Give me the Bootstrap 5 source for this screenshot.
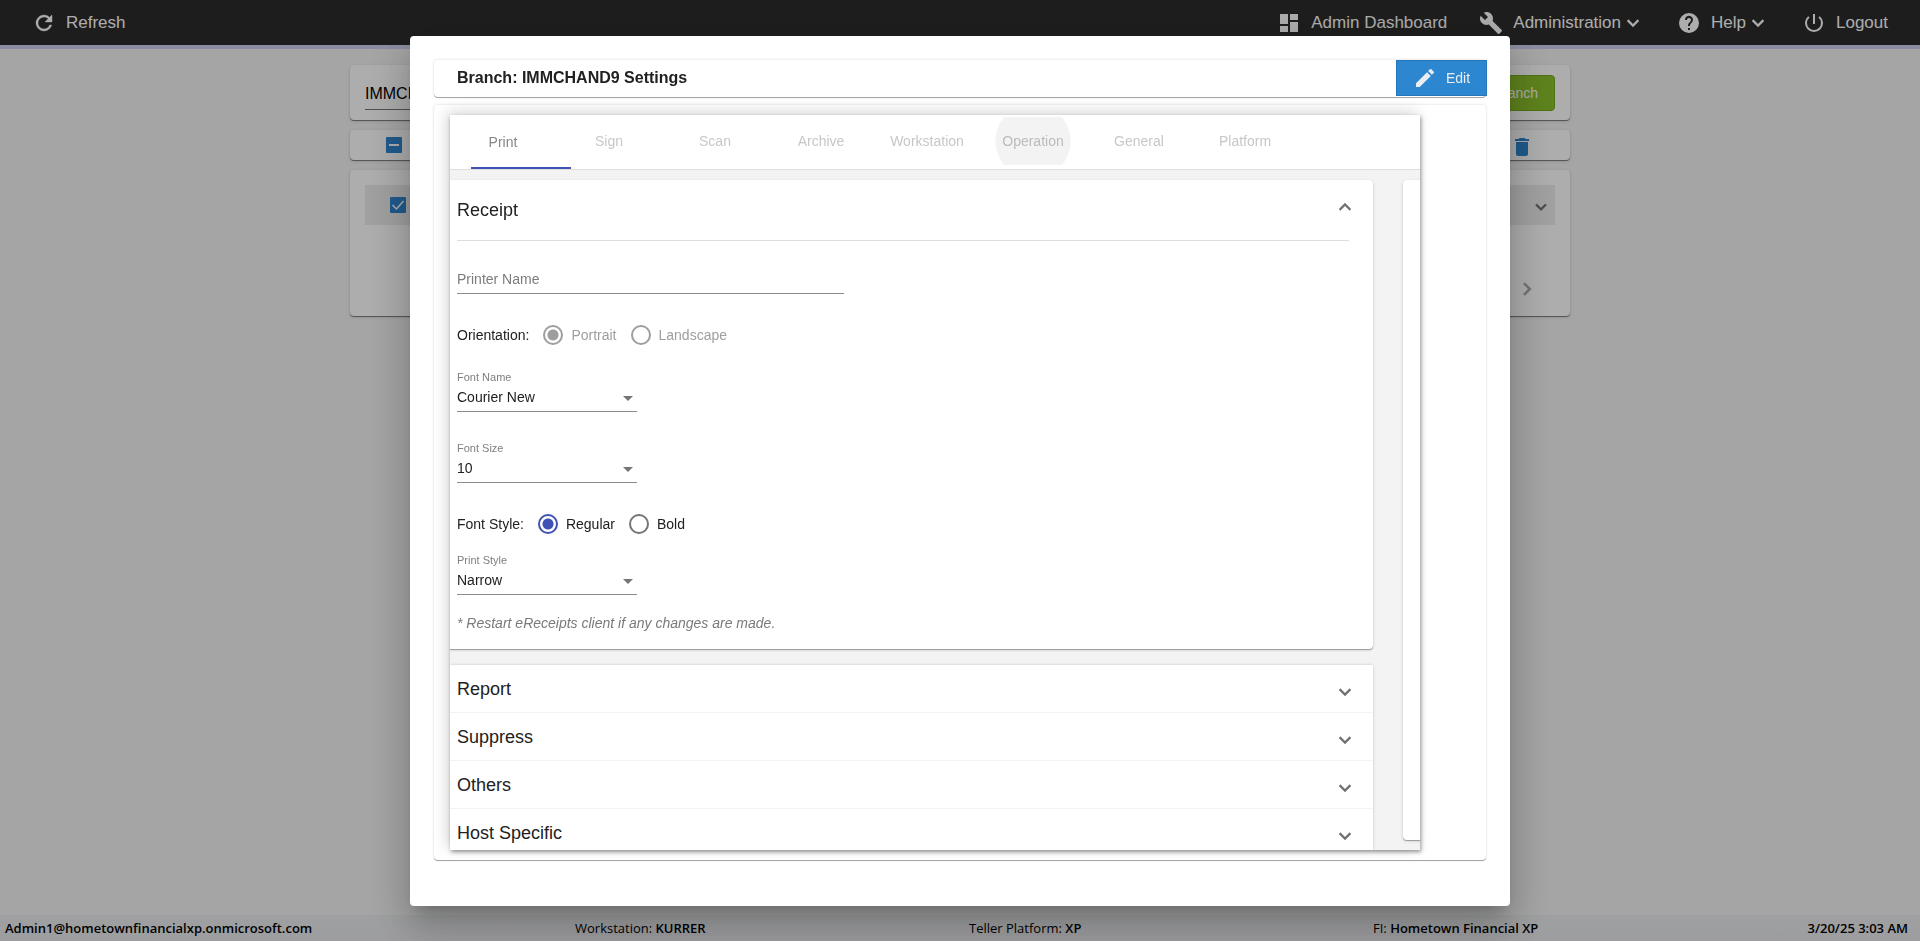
<!DOCTYPE html>
<html lang="en">
<head>
<meta charset="utf-8">
<meta name="viewport" content="width=device-width, initial-scale=1">
<title>Branch Settings</title>
<link href="https://cdn.jsdelivr.net/npm/bootstrap@5.3.0/dist/css/bootstrap.min.css" rel="stylesheet">
<style>
  body { font: 14px/20px "Liberation Sans", Arial, sans-serif; background: #f3f3f3; color: #212121; min-height: 100vh; overflow: hidden; }
  svg { fill: currentColor; flex: none; }
  .topbar { background: #2c2c2c; border-bottom: 4px solid #cccfee; height: 49px; padding: 0 32px; font-size: 17px; }
  .topbar a { color: #fff; text-decoration: none; white-space: nowrap; }
  .topbar .label-gap { margin: 0 0 0 10px; }
  .topbar .links { gap: 32px; }

  .board { width: 1220px; max-width: 100%; padding-top: 16px; gap: 10px; }
  .panel { background: #fff; border-radius: 4px; box-shadow: 0 1px 0 rgba(0,0,0,.38), 0 1px 3px rgba(0,0,0,.22); }
  .panel-search { padding: 10px 15px 9px; height: 55px; }
  .search-box { border: 0; border-bottom: 1px solid #777; width: 300px; height: 35px; font-size: 16px; background: none; color: #000; padding: 3px 0 0; outline: 0; }
  .btn-green { background: #8bc02a; border: 1px solid #76a81f; color: #fff; border-radius: 4px; height: 36px; width: 130px; font-size: 14px; padding: 0 16px 0 0; text-align: right; }
  .panel-tools { height: 30px; padding: 0 36px; color: #2f86d0; }
  .panel-list { height: 146px; padding: 15px; }
  .list-row-on { background: #ececec; height: 40px; padding: 0 3px 0 25px; }
  .tick { appearance: none; width: 16px; height: 16px; margin: 0; border-radius: 1px; background: #2f86d0 center/16px no-repeat; }
  .tick-all { background-image: url("data:image/svg+xml,%3Csvg xmlns='http://www.w3.org/2000/svg' viewBox='0 0 16 16'%3E%3Cpath fill='%23fff' d='M3 7h10v2H3z'/%3E%3C/svg%3E"); }
  .tick-on { background-image: url("data:image/svg+xml,%3Csvg xmlns='http://www.w3.org/2000/svg' viewBox='0 0 16 16'%3E%3Cpath fill='none' stroke='%23fff' stroke-width='1.5' d='M2.5 8l4 4 7-8'/%3E%3C/svg%3E"); }
  .ghost { background: none; border: 0; padding: 0; display: flex; color: inherit; }

  .statusbar { display: grid; grid-template-columns: 570fr 394fr 404fr 430fr 105fr; height: 26px; padding: 0 12px 0 5px; background: linear-gradient(#eaeced, #e8e8ec); color: #000; font: 13px/26px "Open Sans", "Noto Sans", sans-serif; white-space: nowrap; }
  .statusbar b { font-weight: 600; }

  .modal-backdrop.show { opacity: .32; }
  .modal-dialog { max-width: 1100px; height: calc(100vh - 71px); margin: 36px auto 35px; }
  .modal-content { height: 100%; border: 0; border-radius: 4px; padding: 24px 24px 46px; box-shadow: 0 11px 15px -7px rgba(0,0,0,.2), 0 24px 38px 3px rgba(0,0,0,.14), 0 9px 46px 8px rgba(0,0,0,.12); gap: 8px; color: inherit; }
  .sheet { background: #fff; border-radius: 4px; box-shadow: 0 1px 0 #a3a7a6, 0 0 3px rgba(0,0,0,.16); }
  .title-sheet { height: 37px; padding-left: 23px; }
  .title-sheet h1 { font-size: 16px; line-height: 20px; font-weight: 700; margin: 0 0 2px; }
  .btn-edit { background: #2d86d0; border: 1px solid #2776b8; color: #e8eef4; height: 36px; width: 91px; border-radius: 0; font-size: 14px; padding: 0 0 0 16px; gap: 9px; margin: 0 -1px 1px 0; }
  .body-sheet { padding: 10px 66px 10px 16px; min-height: 0; }
  .frame { background: #f3f3f3; overflow: hidden; box-shadow: 1px 2px 4px rgba(0,0,0,.4), -3px -3px 14px rgba(0,0,0,.16); }
  .tabs { background: #fff; border-bottom: 1px solid #dedede; height: 55px; flex: none; }
  .tabs .nav-link { width: 106px; height: 54px; padding: 0 0 2px; border: 0; background: none; color: #c7c7c7; position: relative; border-radius: 0; }
  .tabs .nav-link.active { color: #878787; padding: 0; }
  .tabs .nav-link.active::after { content: ""; position: absolute; left: 21px; bottom: 0; width: 100px; height: 2px; background: #3f51b5; z-index: 1; }
  .ripple { color: #bbb; height: 48px; margin: 0 15px; background: radial-gradient(circle at center, #f3f3f3 37px, transparent 38px); }

  .panes { padding: 10px 0; gap: 30px; min-height: 0; }
  .pane { flex: 0 0 calc(100% - 47px); gap: 16px; min-width: 0; min-height: 0; }
  .section-card { background: #fff; border-radius: 0 4px 4px 0; padding: 0 24px 16px 7px; box-shadow: 0 1px 0 #a0a0a0, 0 1px 3px rgba(0,0,0,.2); }
  .side-card { background: #fff; border-radius: 4px; box-shadow: 0 1px 0 #a0a0a0, 0 1px 3px rgba(0,0,0,.2); }
  h2, .accordion-title { font-size: 18px; line-height: 24px; font-weight: 400; margin: 0; }
  .section-head { height: 61px; border-bottom: 1px solid #dedede; }
  .chev { color: #707070; }
  .chev-bold { stroke: currentColor; stroke-width: .4; }
  .section-head .chev { margin: 0 -8px 6px 0; }
  .form-stack { padding-top: 26px; }
  .line-input { border: 0; border-bottom: 1px solid #8a8a8a; border-radius: 0; padding: 0 0 2px; font-size: 14px; line-height: 24px; width: 387px; max-width: 100%; height: 27px; background: none; color: #212121; outline: 0; }
  .line-input::placeholder { color: #7c7c7c; opacity: 1; }
  .field { width: 180px; height: 43px; }
  .field label { display: block; font-size: 11px; line-height: 16px; color: #808080; }
  .field select { width: 100%; height: 27px; border: 0; border-bottom: 1px solid #8a8a8a; border-radius: 0; padding: 0 20px 2px 0; font-size: 14px; line-height: 24px; color: #212121; background: url("data:image/svg+xml,%3Csvg xmlns='http://www.w3.org/2000/svg' viewBox='0 0 10 5'%3E%3Cpath fill='%23757575' d='M0 0h10L5 5z'/%3E%3C/svg%3E") right 4px top 11px/10px 5px no-repeat; }
  .choices { height: 20px; margin-top: 31px; }
  .choices .form-check-input { width: 20px; height: 20px; margin: 0; border: 2px solid #757575; background: none; opacity: 1; flex: none; }
  .choices .form-check-input:checked { border-color: #3f51b5; background: radial-gradient(circle, #3f51b5 5px, transparent 6px); }
  .choices .form-check-input:disabled { border-color: #9e9e9e; opacity: 1; }
  .choices .form-check-input:disabled:checked { background: radial-gradient(circle, #9e9e9e 5px, transparent 6px); }
  .choices label { margin: 0 14px 0 8px; }
  .choices .form-check-input:disabled ~ label { color: #9e9e9e; opacity: 1; }
  .choices span { margin-right: 14px; }
  .mt-18 { margin-top: 18px; } .mt-28 { margin-top: 28px; }
  .note { color: #7a7a7a; font-style: italic; margin: 18px 0 0; }
  .fold-list { background: #fff; box-shadow: 0 0 3px rgba(0,0,0,.18); margin-bottom: -10px; overflow: hidden; min-height: 0; flex: 1 1 0; }
  .fold-row { height: 48px; padding: 0 16px 0 7px; border: 0; background: #fff; border-bottom: 1px solid #f3f3f3; flex: none; color: #212121; text-align: left; }
  .fold-row svg { margin-top: 6px; }
  .pager { padding: 50px 15px 0 0; }
</style>
</head>
<body class="d-flex flex-column">

<header class="topbar d-flex align-items-center justify-content-between">
  <a href="#" class="d-flex align-items-center"><svg width="24" height="24" viewBox="0 0 24 24" class="chev-bold"><path d="M17.65 6.35A8 8 0 1 0 19.73 14h-2.08A6 6 0 1 1 12 6c1.66 0 3.14.69 4.22 1.78L13 11h7V4z"/></svg><span class="label-gap">Refresh</span></a>
  <nav class="links d-flex align-items-center">
    <a href="#" class="d-flex align-items-center"><svg width="24" height="24" viewBox="0 0 24 24"><path d="M3 13h8V3H3zm0 8h8v-6H3zm10 0h8V11h-8zm0-18v6h8V3z"/></svg><span class="label-gap">Admin Dashboard</span></a>
    <a href="#" class="d-flex align-items-center"><svg width="24" height="24" viewBox="0 0 24 24"><path d="M22.7 19l-9.1-9.1c.9-2.3.4-5-1.5-6.9-2-2-5-2.4-7.4-1.3L9 6 6 9 1.6 4.7C.4 7.1.9 10.1 2.9 12.1c1.9 1.9 4.6 2.4 6.9 1.5l9.1 9.1c.4.4 1 .4 1.4 0l2.3-2.3c.5-.4.5-1.1.1-1.4z"/></svg><span class="label-gap">Administration</span><svg width="24" height="24" viewBox="0 0 24 24" class="chev-bold"><path d="M7.41 8.59L12 13.17l4.59-4.58L18 10l-6 6-6-6z"/></svg></a>
    <a href="#" class="d-flex align-items-center"><svg width="24" height="24" viewBox="0 0 24 24"><path d="M12 2a10 10 0 1 0 0 20 10 10 0 0 0 0-20zm1 17h-2v-2h2zm2.07-7.75l-.9.92C13.45 12.9 13 13.5 13 15h-2v-.5c0-1.1.45-2.1 1.17-2.83l1.24-1.26A2 2 0 1 0 10 9H8a4 4 0 1 1 7.07 2.25z"/></svg><span class="label-gap">Help</span><svg width="24" height="24" viewBox="0 0 24 24" class="chev-bold"><path d="M7.41 8.59L12 13.17l4.59-4.58L18 10l-6 6-6-6z"/></svg></a>
    <a href="#" class="d-flex align-items-center"><svg width="24" height="24" viewBox="0 0 24 24"><path d="M11 3h2v10h-2zM17.83 5.17l-1.42 1.42A7 7 0 1 1 7.58 6.58L6.17 5.17a9 9 0 1 0 11.66 0z"/></svg><span class="label-gap">Logout</span></a>
  </nav>
</header>

<main class="board d-flex flex-column mx-auto flex-grow-1">
  <div class="panel panel-search d-flex justify-content-between">
    <input class="search-box" type="text" value="IMMCHAND9" aria-label="Search branch">
    <button type="button" class="btn-green">Add Branch</button>
  </div>
  <div class="panel panel-tools d-flex align-items-center justify-content-between">
    <input type="checkbox" class="tick tick-all" aria-label="Select all">
    <button type="button" class="ghost mt-1" aria-label="Delete"><svg width="24" height="24" viewBox="0 0 24 24"><path d="M6 19c0 1.1.9 2 2 2h8c1.1 0 2-.9 2-2V7H6zM19 4h-3.500l-1-1h-5l-1 1H5v2h14z"/></svg></button>
  </div>
  <div class="panel panel-list">
    <div class="list-row-on d-flex align-items-center justify-content-between">
      <input type="checkbox" class="tick tick-on" checked aria-label="Select IMMCHAND9">
      <button type="button" class="ghost mt-1 chev" aria-label="Expand"><svg width="22" height="22" viewBox="0 0 24 24" class="chev-bold"><path d="M7.41 8.59L12 13.17l4.59-4.58L18 10l-6 6-6-6z"/></svg></button>
    </div>
    <div class="pager d-flex justify-content-end"><button type="button" class="ghost chev" aria-label="Next page"><svg width="26" height="28" viewBox="0 0 24 24" opacity=".6" class="chev-bold"><path d="M10 6L8.590 7.410 13.170 12l-4.580 4.590L10 18l6-6z"/></svg></button></div>
  </div>
</main>

<footer class="statusbar">
  <b>Admin1@hometownfinancialxp.onmicrosoft.com</b>
  <span>Workstation: <b>KURRER</b></span>
  <span>Teller Platform: <b>XP</b></span>
  <span>FI: <b>Hometown Financial XP</b></span>
  <b class="d-flex justify-content-end">3/20/25 3:03 AM</b>
</footer>

<div class="modal-backdrop show"></div>
<div class="modal d-block" tabindex="-1" role="dialog" aria-labelledby="dlgTitle">
  <div class="modal-dialog">
    <div class="modal-content">
      <div class="sheet title-sheet d-flex align-items-center justify-content-between flex-shrink-0">
        <h1 id="dlgTitle">Branch: IMMCHAND9 Settings</h1>
        <button type="button" class="btn-edit d-flex align-items-center"><svg width="24" height="24" viewBox="0 0 24 24"><path d="M3 17.25V21h3.75L17.81 9.94l-3.75-3.75zM20.71 7.04a1 1 0 0 0 0-1.41l-2.34-2.34a1 1 0 0 0-1.41 0l-1.83 1.83 3.75 3.75z"/></svg>Edit</button>
      </div>
      <div class="sheet body-sheet d-flex flex-grow-1">
        <div class="frame d-flex flex-column flex-grow-1">
          <ul class="nav tabs flex-nowrap" role="tablist">
            <li class="nav-item"><button type="button" class="nav-link active" role="tab">Print</button></li>
            <li class="nav-item"><button type="button" class="nav-link" role="tab">Sign</button></li>
            <li class="nav-item"><button type="button" class="nav-link" role="tab">Scan</button></li>
            <li class="nav-item"><button type="button" class="nav-link" role="tab">Archive</button></li>
            <li class="nav-item"><button type="button" class="nav-link" role="tab">Workstation</button></li>
            <li class="nav-item"><button type="button" class="nav-link" role="tab"><span class="ripple d-flex align-items-center justify-content-center">Operation</span></button></li>
            <li class="nav-item"><button type="button" class="nav-link" role="tab">General</button></li>
            <li class="nav-item"><button type="button" class="nav-link" role="tab">Platform</button></li>
          </ul>
          <div class="panes d-flex flex-grow-1">
            <div class="pane d-flex flex-column">
              <section class="section-card flex-shrink-0">
                <div class="section-head d-flex align-items-center justify-content-between">
                  <h2>Receipt</h2>
                  <button type="button" class="ghost chev" aria-label="Collapse"><svg width="24" height="24" viewBox="0 0 24 24" class="chev-bold"><path d="M12 8l-6 6 1.410 1.410L12 10.830l4.590 4.580L18 14z"/></svg></button>
                </div>
                <div class="form-stack"><input type="text" class="line-input d-block" placeholder="Printer Name" aria-label="Printer Name"></div>
                <div class="choices d-flex align-items-center" role="radiogroup" aria-labelledby="orientLabel">
                  <span id="orientLabel">Orientation:</span>
                  <div class="d-flex align-items-center"><input class="form-check-input" type="radio" name="orient" id="portrait" checked disabled><label for="portrait">Portrait</label></div>
                  <div class="d-flex align-items-center"><input class="form-check-input" type="radio" name="orient" id="landscape" disabled><label for="landscape">Landscape</label></div>
                </div>
                <div class="field mt-4"><label for="fontName">Font Name</label><select class="form-select" id="fontName"><option>Courier New</option></select></div>
                <div class="field mt-28"><label for="fontSize">Font Size</label><select class="form-select" id="fontSize"><option>10</option></select></div>
                <div class="choices d-flex align-items-center" role="radiogroup" aria-labelledby="styleLabel">
                  <span id="styleLabel">Font Style:</span>
                  <div class="d-flex align-items-center"><input class="form-check-input" type="radio" name="fstyle" id="regular" checked><label for="regular">Regular</label></div>
                  <div class="d-flex align-items-center"><input class="form-check-input" type="radio" name="fstyle" id="bold"><label for="bold">Bold</label></div>
                </div>
                <div class="field mt-18"><label for="printStyle">Print Style</label><select class="form-select" id="printStyle"><option>Narrow</option></select></div>
                <p class="note">* Restart eReceipts client if any changes are made.</p>
              </section>
              <div class="fold-list d-flex flex-column">
                <button type="button" class="fold-row accordion-title d-flex align-items-center justify-content-between">Report<svg class="chev chev-bold" width="24" height="24" viewBox="0 0 24 24"><path d="M7.41 8.59L12 13.17l4.59-4.58L18 10l-6 6-6-6z"/></svg></button>
                <button type="button" class="fold-row accordion-title d-flex align-items-center justify-content-between">Suppress<svg class="chev chev-bold" width="24" height="24" viewBox="0 0 24 24"><path d="M7.41 8.59L12 13.17l4.59-4.58L18 10l-6 6-6-6z"/></svg></button>
                <button type="button" class="fold-row accordion-title d-flex align-items-center justify-content-between">Others<svg class="chev chev-bold" width="24" height="24" viewBox="0 0 24 24"><path d="M7.41 8.59L12 13.17l4.59-4.58L18 10l-6 6-6-6z"/></svg></button>
                <button type="button" class="fold-row accordion-title d-flex align-items-center justify-content-between">Host Specific<svg class="chev chev-bold" width="24" height="24" viewBox="0 0 24 24"><path d="M7.41 8.59L12 13.17l4.59-4.58L18 10l-6 6-6-6z"/></svg></button>
              </div>
            </div>
            <div class="pane side-card"></div>
          </div>
        </div>
      </div>
    </div>
  </div>
</div>

<script src="https://cdn.jsdelivr.net/npm/bootstrap@5.3.0/dist/js/bootstrap.bundle.min.js"></script>
</body>
</html>
